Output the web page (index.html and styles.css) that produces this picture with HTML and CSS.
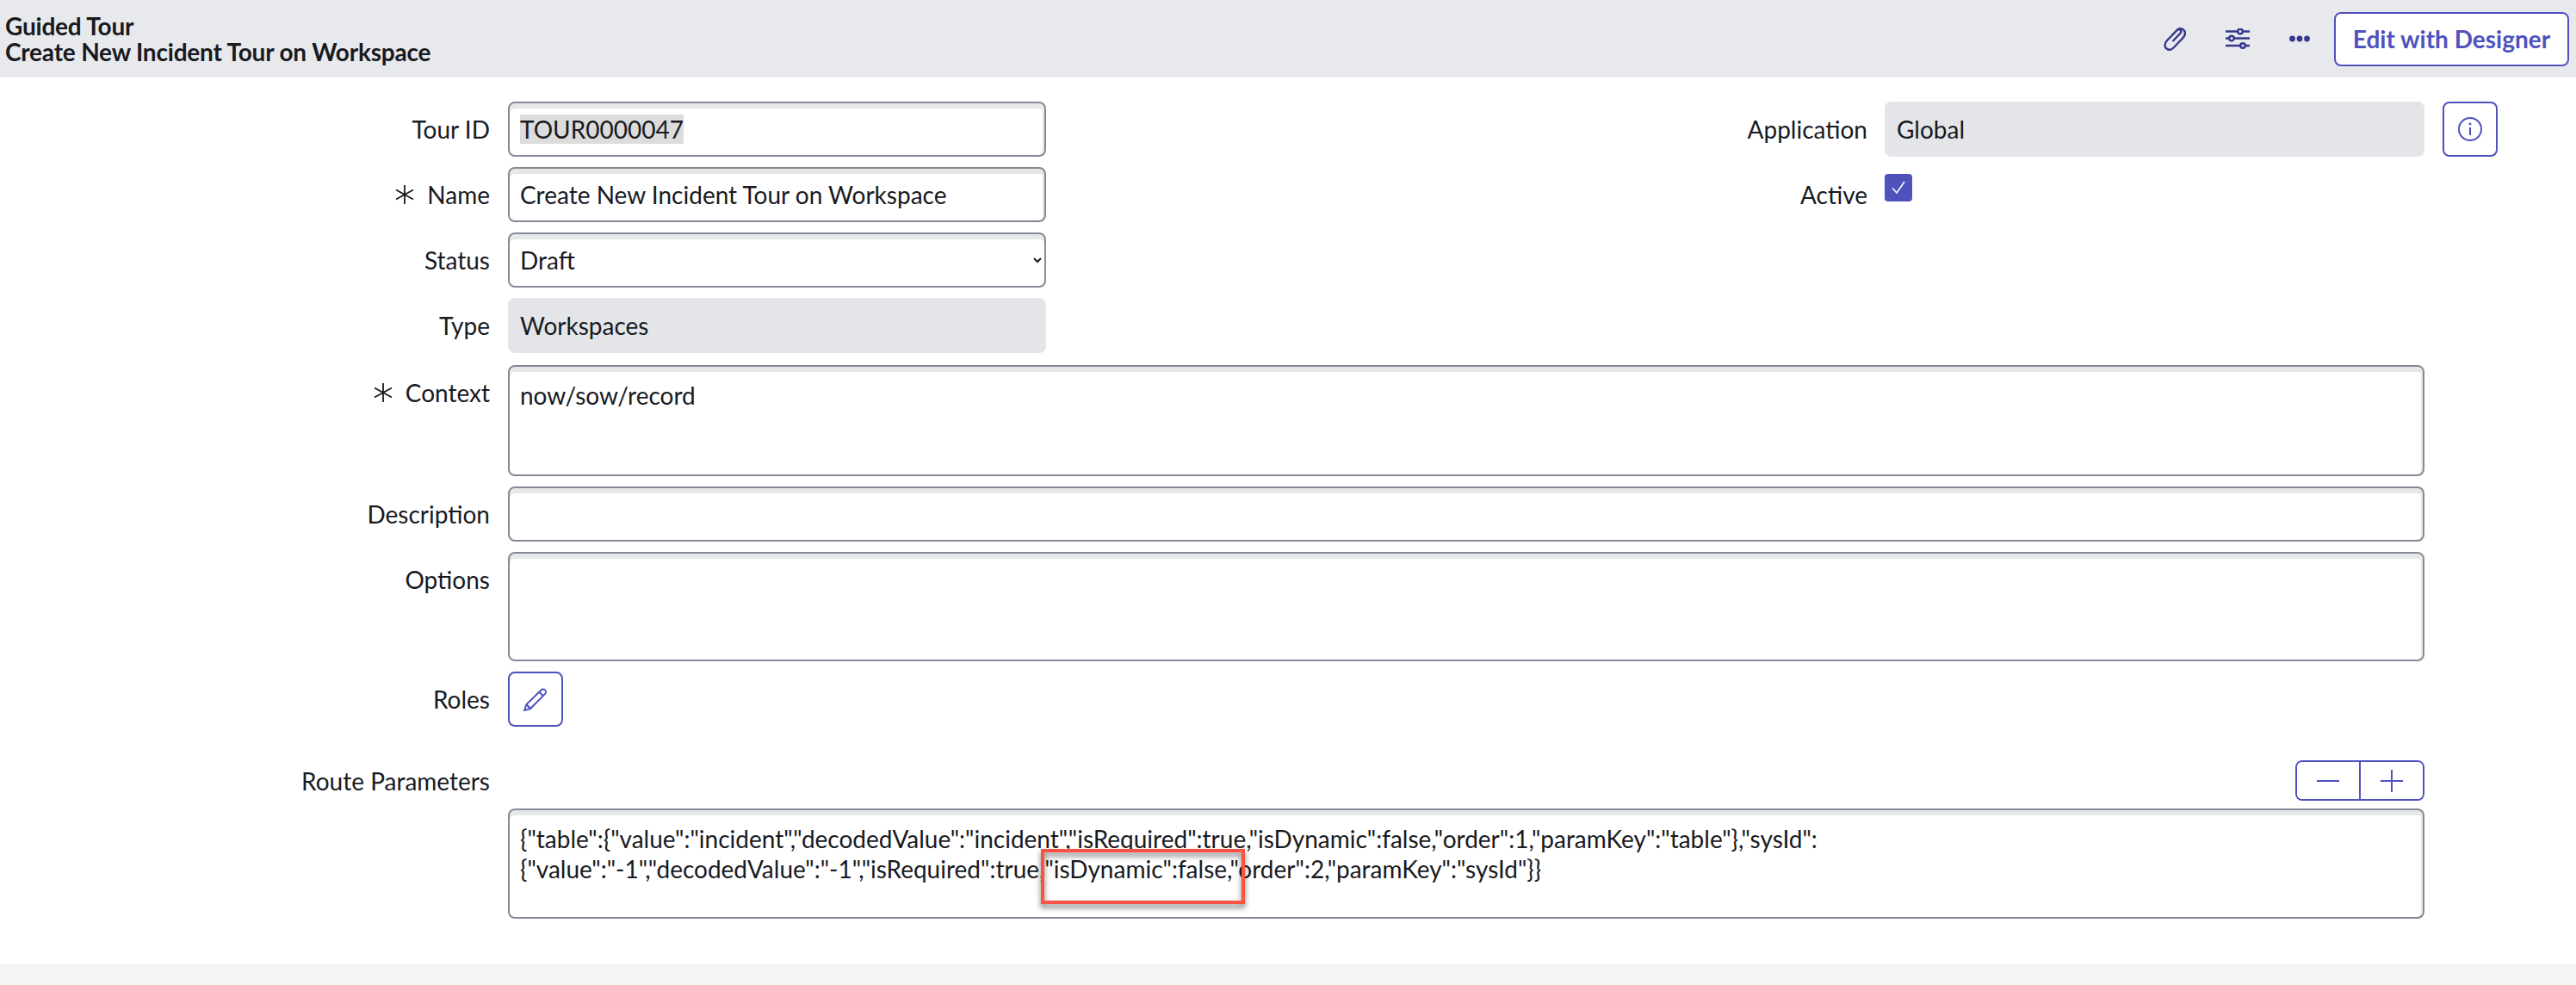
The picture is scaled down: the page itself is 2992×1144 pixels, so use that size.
FILE: index.html
```html
<!DOCTYPE html>
<html lang="en">
  <head>
    <meta charset="UTF-8" />
    <title>Guided Tour</title>
    <link rel="stylesheet" href="styles.css">
  </head>
  <body>
    <div class="header">
      <div class="header-title">
        <div>Guided Tour</div>
        <div>Create New Incident Tour on Workspace</div>
      </div>
      <div class="header-actions">
        <svg class="icon-clip" viewBox="0 0 26 27" width="26" height="27">
          <path d="M10.5 16 L19.5 6.5 a2.6 2.6 0 0 0 -3.8 -3.6 L4 15 C0 19.5 1.5 23 3.5 24.5 C6 26.5 9 26 11.5 23.5 L22 12.5 C25.5 8.5 25.5 5 23.5 3 C21 0.5 17.5 1 15.5 3" />
        </svg>
        <svg class="icon-sliders" viewBox="0 0 28 24" width="28" height="24">
          <path d="M0 3.5H28M0 11.5H28M0 20H28" />
          <circle cx="17" cy="3.5" r="2.8" />
          <circle cx="7" cy="11.5" r="2.8" />
          <circle cx="20" cy="20" r="2.8" />
        </svg>
        <svg class="icon-dots" viewBox="0 0 24 8" width="24" height="8">
          <circle cx="3.5" cy="4" r="3.4" />
          <circle cx="12" cy="4" r="3.4" />
          <circle cx="20.5" cy="4" r="3.4" />
        </svg>
        <button class="designer-btn">Edit with Designer</button>
      </div>
    </div>

    <div class="form">
      <div class="form-top">
        <div class="form-col">
          <div class="row">
            <div class="label">Tour ID</div>
            <div class="field"><span class="selected">TOUR0000047</span></div>
          </div>
          <div class="row">
            <div class="label">
              <svg class="star" viewBox="0 0 26 24" width="26" height="24"><path d="M13 1V23M3 6.5L23 17.5M3 17.5L23 6.5" /></svg>Name
            </div>
            <div class="field">Create New Incident Tour on Workspace</div>
          </div>
          <div class="row">
            <div class="label">Status</div>
            <select class="field select"><option>Draft</option></select>
          </div>
          <div class="row">
            <div class="label">Type</div>
            <div class="field readonly">Workspaces</div>
          </div>
        </div>
        <div class="form-col form-col-right">
          <div class="row">
            <div class="label label-right">Application</div>
            <div class="field readonly wide">Global</div>
            <button class="icon-btn info-btn">
              <svg viewBox="0 0 28 28" width="28" height="28">
                <circle cx="14" cy="14" r="13" />
                <path d="M14 12V21" />
                <circle class="dot" cx="14" cy="8" r="1.4" />
              </svg>
            </button>
          </div>
          <div class="row">
            <div class="label label-right">Active</div>
            <div class="checkbox">
              <svg viewBox="0 0 32 32" width="32" height="32"><path d="M9 16.5L14 22L23 9" /></svg>
            </div>
          </div>
        </div>
      </div>

      <div class="row row-context">
        <div class="label">
          <svg class="star" viewBox="0 0 26 24" width="26" height="24"><path d="M13 1V23M3 6.5L23 17.5M3 17.5L23 6.5" /></svg>Context
        </div>
        <div class="field area context">now/sow/record</div>
      </div>
      <div class="row">
        <div class="label">Description</div>
        <div class="field area"></div>
      </div>
      <div class="row">
        <div class="label">Options</div>
        <div class="field area options"></div>
      </div>
      <div class="row">
        <div class="label"><span>Roles</span></div>
        <button class="icon-btn">
          <svg class="icon-pencil" viewBox="0 0 28 27" width="28" height="27">
            <path d="M1 26L3.5 19L20.5 2.5a3.1 3.1 0 0 1 4.6 4.4L8 24ZM3.5 19L8 24M18.3 4.7L22.8 9.2" />
          </svg>
        </button>
      </div>

      <div class="row route-head">
        <div class="label">Route Parameters</div>
        <div class="stepper">
          <button class="step-btn"><svg viewBox="0 0 28 28" width="28" height="28"><path d="M1 14H27" /></svg></button>
          <button class="step-btn"><svg viewBox="0 0 28 28" width="28" height="28"><path d="M1 14H27M14 1V27" /></svg></button>
        </div>
      </div>
      <div class="row">
        <div class="label"></div>
        <div class="field area route">
          {"table":{"value":"incident","decodedValue":"incident","isRequired":true,"isDynamic":false,"order":1,"paramKey":"table"},"sysId":<br>{"value":"-1","decodedValue":"-1","isRequired":true,<span class="callout-anchor"><span class="callout"></span>"isDynamic":false,"</span>order":2,"paramKey":"sysId"}}
        </div>
      </div>
    </div>
    <div class="footer"></div>
  </body>
</html>
```

FILE: styles.css
```css
* {
  box-sizing: border-box;
}
body {
  margin: 0;
  height: 1144px;
  overflow: hidden;
  display: flex;
  flex-direction: column;
  font-family: Lato, "Liberation Sans", sans-serif;
  font-size: 28px;
  color: #181a1f;
  background: #fff;
}
button {
  font-family: inherit;
  background: #fff;
  padding: 0;
  cursor: pointer;
}
.header {
  height: 90px;
  flex: none;
  display: flex;
  align-items: center;
  justify-content: space-between;
  padding: 0 8px 0 6px;
  background: #e8e9ed;
}
.header-title {
  font-weight: 700;
  line-height: 30px;
  letter-spacing: -0.2px;
}
.header-actions {
  display: flex;
  align-items: center;
}
.header-actions svg {
  fill: none;
  stroke: #35388c;
  stroke-width: 2.4;
}
.icon-clip {
  margin-right: 46px;
}
.icon-sliders {
  margin-right: 46px;
}
.icon-sliders circle {
  fill: #e8e9ed;
}
.header-actions .icon-dots {
  fill: #35388c;
  stroke: none;
  margin-right: 28px;
}
.designer-btn {
  width: 273px;
  height: 63px;
  border: 2px solid #4f52bd;
  border-radius: 8px;
  color: #4f52bd;
  font-size: 28px;
  font-weight: 700;
}
.form {
  padding-top: 28px;
  flex: 1;
}
.form-top {
  display: flex;
}
.form-col {
  width: 1215px;
}
.form-col-right {
  margin-left: 0;
}
.row {
  display: flex;
  margin-bottom: 12px;
}
.label {
  width: 569px;
  margin-right: 21px;
  flex: none;
  height: 64px;
  display: flex;
  align-items: center;
  justify-content: flex-end;
}
.label-right {
  width: 954px;
  margin-right: 20px;
}
.star {
  fill: none;
  stroke: #181a1f;
  stroke-width: 1.8;
  margin-right: 13px;
}
.field {
  width: 625px;
  height: 64px;
  padding: 0 12px;
  display: flex;
  align-items: center;
  font-family: inherit;
  font-size: 28px;
  color: #181a1f;
  background: #fff;
  border: 2px solid #848b96;
  border-radius: 8px;
  box-shadow: inset 0 6px 0 #e6e8e8, inset -2px 0 0 #e6e8e8;
}
.selected {
  background: #dcdcdc;
}
.select {
  padding: 0 8px;
  box-shadow: inset 0 6px 0 #e6e8e8;
}
.readonly {
  background: #e4e5e9;
  border: none;
  box-shadow: none;
  padding: 0 14px;
}
.wide {
  width: 627px;
  flex: none;
}
.checkbox {
  width: 32px;
  height: 32px;
  margin-top: 8px;
  background: #4f52bd;
  border-radius: 4px;
}
.checkbox svg {
  fill: none;
  stroke: #fff;
  stroke-width: 1.6;
}
.icon-btn {
  width: 64px;
  height: 64px;
  flex: none;
  display: flex;
  align-items: center;
  justify-content: center;
  border: 2px solid #4f52bd;
  border-radius: 8px;
}
.icon-btn svg {
  fill: none;
  stroke: #4f52bd;
  stroke-width: 2;
}
.info-btn {
  margin-left: 21px;
}
.info-btn .dot {
  fill: #4f52bd;
  stroke: none;
}
.row-context {
  margin-top: 2px;
}
.area {
  width: 2226px;
  display: block;
  padding: 16px 12px 0;
  line-height: 35px;
}
.context {
  height: 129px;
}
.options {
  height: 127px;
}
.route-head {
  margin-top: 39px;
  margin-bottom: 9px;
  align-items: center;
  height: 47px;
}
.stepper {
  margin-left: auto;
  margin-right: 176px;
  display: flex;
  height: 47px;
  width: 150px;
  border: 2px solid #4f52bd;
  border-radius: 8px;
  overflow: hidden;
}
.step-btn {
  flex: 1;
  display: flex;
  align-items: center;
  justify-content: center;
  border: none;
}
.step-btn + .step-btn {
  border-left: 2px solid #4f52bd;
}
.step-btn svg {
  fill: none;
  stroke: #4f52bd;
  stroke-width: 2;
}
.route {
  height: 128px;
  padding-top: 16px;
}
.callout-anchor {
  position: relative;
}
.callout {
  position: absolute;
  left: -4px;
  top: -6px;
  width: 237px;
  height: 64px;
  border: 4px solid #fa5343;
  filter: drop-shadow(0 4px 3px rgba(0, 0, 0, 0.55));
}
.footer {
  height: 24px;
  flex: none;
  background: #f5f5f7;
}
```
